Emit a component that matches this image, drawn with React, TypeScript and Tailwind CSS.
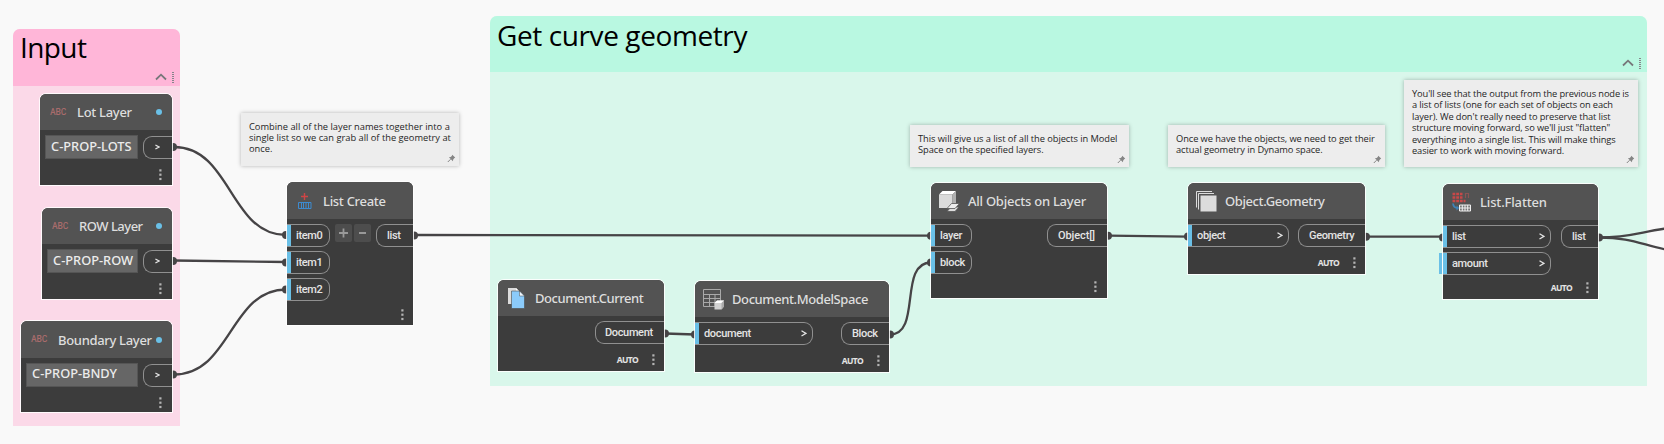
import React from "react";

type Port = { label: string; className: string; chevron?: boolean; pending?: boolean };

const Kebab = ({ className = "" }: { className?: string }) => (
  <svg className={className} width="3" height="12" viewBox="0 0 3 12" fill="#b4b4b4">
    <rect x="0.3" y="0.3" width="2.2" height="2.2" />
    <rect x="0.3" y="4.6" width="2.2" height="2.2" />
    <rect x="0.3" y="8.9" width="2.2" height="2.2" />
  </svg>
);

const Pin = () => (
  <svg className="absolute right-[3px] bottom-[3px]" width="9" height="9" viewBox="0 0 9 9">
    <path d="M5.2 0.8 8.2 3.6 7.2 4.2 6.2 5.4 5.9 7.2 1.9 3.3 3.7 3 4.8 2Z" fill="#858585" />
    <path d="M3.6 5.2 0.8 8" stroke="#858585" strokeWidth="1" />
  </svg>
);

function Note({ className, lines, text }: { className: string; lines: string[]; text: string }) {
  return (
    <div className={`absolute bg-[#ededed] pl-[8px] font-['Open_Sans',sans-serif] text-[9.3px] text-[#1f1f1f] shadow-[0_0_4px_rgba(0,0,0,0.28)] ${className}`}>
      {lines.map((l) => (
        <div key={l} className={`whitespace-nowrap ${text}`}>{l}</div>
      ))}
      <Pin />
    </div>
  );
}

function Group({ className, head, title, headClass, titleClass }: { className: string; head: string; title: string; headClass: string; titleClass: string }) {
  return (
    <section className={`absolute flex flex-col rounded-t-[7px] ${className}`}>
      <header className={`relative rounded-t-[7px] ${headClass} ${head}`}>
        <h2 className={`font-['Open_Sans',sans-serif] whitespace-nowrap text-black ${titleClass}`}>{title}</h2>
        <svg className="absolute right-[4px] bottom-[3px]" width="22" height="12" viewBox="0 0 22 12" fill="none">
          <path d="M2 8.5 7 3.7 12 8.5" stroke="#77777a" strokeWidth="1.8" />
          <path d="M19 1V12" stroke="#85858a" strokeWidth="2" strokeDasharray="1 1" shapeRendering="crispEdges" />
        </svg>
      </header>
    </section>
  );
}

const Chevron = () => (
  <svg width="6" height="7" viewBox="0 0 6 7" fill="none">
    <path d="M0.5 0.8 5 3.4 0.5 6" stroke="#e4e4e4" strokeWidth="1.3" />
  </svg>
);

function InPort({ port }: { port: Port }) {
  return (
    <div className={`relative flex h-[23px] items-center justify-between rounded-r-[9px] border border-l-0 border-[#909090] pr-[5px] pl-[9px] ${port.className}`}>
      <i className="absolute top-0 bottom-0 left-0 w-[4px] bg-[#6ac0e7]" />
      {port.pending && <i className="absolute top-0 bottom-0 left-[-4px] w-[3px] bg-[#6ac0e7]" />}
      <span className="pt-[1px] whitespace-nowrap">{port.label}</span>
      {port.chevron && <Chevron />}
    </div>
  );
}

function OutPort({ port }: { port: Port }) {
  return (
    <div className={`flex h-[23px] items-center rounded-l-[9px] border border-r-0 border-[#909090] ${port.className}`}>
      <span className="pt-[1px] whitespace-nowrap">{port.label}</span>
    </div>
  );
}

type NodeProps = {
  className: string;
  title: string;
  titleClass: string;
  icon: React.ReactNode;
  inputs?: Port[];
  output: Port;
  auto?: boolean;
  foot: string;
  head?: string;
  middle?: React.ReactNode;
};

function GraphNode({ className, title, titleClass, icon, inputs = [], output, auto, foot, head = "h-[36px]", middle }: NodeProps) {
  return (
    <article className={`absolute flex flex-col rounded-t-[6px] bg-[#3c3c3c] font-['Roboto',sans-serif] text-[11px] font-medium tracking-[-0.35px] text-[#e4e4e4] shadow-[0_0_0_1px_rgba(255,255,255,0.85)] ${className}`}>
      <header className={`flex shrink-0 items-center rounded-t-[6px] bg-[#535353] ${head}`}>
        {icon}
        <span className={`pt-[1px] font-['Noto_Sans',sans-serif] text-[13px] leading-none whitespace-nowrap text-[#dedede] ${titleClass}`}>{title}</span>
      </header>
      <div className="flex grow items-start justify-between pt-[5px]">
        <div className="flex flex-col gap-[4px]">
          {inputs.map((p) => <InPort key={p.label} port={p} />)}
        </div>
        {middle}
        <OutPort port={output} />
      </div>
      <footer className={`flex shrink-0 items-center justify-end ${foot}`}>
        {auto && <span className="mr-[14px] font-['Noto_Sans',sans-serif] text-[8.5px] font-bold tracking-[-0.65px]">AUTO</span>}
        <Kebab />
      </footer>
    </article>
  );
}

function LayerNode({ className, title, titleClass, value, valueClass, head }: { className: string; title: string; titleClass: string; value: string; valueClass: string; head: string }) {
  return (
    <article className={`absolute flex flex-col rounded-t-[6px] bg-[#3c3c3c] font-['Noto_Sans',sans-serif] text-[#e0e0e0] shadow-[0_0_0_1px_rgba(255,255,255,0.85)] ${className}`}>
      <header className={`flex shrink-0 items-center rounded-t-[6px] bg-[#535353] pl-[10px] ${head}`}>
        <span className="w-[17px] font-['Roboto',sans-serif] text-[8.5px] leading-none font-medium tracking-[-0.1px] text-[#a86c6c]">ABC</span>
        <span className={`text-[13px] leading-none font-medium whitespace-nowrap text-[#dedede] ${titleClass}`}>{title}</span>
        <i className="mr-[10px] ml-auto size-[6px] shrink-0 rounded-full bg-[#6ac0e7]" />
      </header>
      <div className="flex items-center pt-[5px] pl-[5px]">
        <div className={`flex h-[24px] items-center border border-[#555] bg-[#666] pl-[5px] text-[12.8px] font-medium whitespace-nowrap text-[#ececec] ${valueClass}`}>{value}</div>
        <div className="ml-auto flex h-[23px] w-[29px] items-center rounded-l-[9px] border border-r-0 border-[#909090] pl-[11px]">
          <svg width="5" height="6" viewBox="0 0 5 6" fill="none"><path d="M0.4 1 4 3 0.4 5" stroke="#e4e4e4" strokeWidth="1.2" /></svg>
        </div>
      </div>
      <Kebab className="mt-[10px] mr-[10px] ml-auto" />
    </article>
  );
}

const ListCreateIcon = () => (
  <svg className="ml-[11px]" width="14" height="18" viewBox="0 0 14 18" fill="none">
    <path d="M6.5 1v7M3 4.5h7" stroke="#cf4545" strokeWidth="1.4" />
    <path d="M.5 10.5h12.500v6H.5ZM3.500 10.5v6M5.500 10.5v6M8 10.5v6M10.500 10.5v6" stroke="#3d8bd0" strokeWidth="1" />
  </svg>
);

const DocumentIcon = () => (
  <svg className="ml-[9px]" width="18" height="22" viewBox="0 0 18 22">
    <path d="M1 1h8l3 3v13H1Z" fill="#dcdcdc" />
    <path d="M9 1v3h3Z" fill="#fff" />
    <path d="M4.500 4h8l5 5v12.500h-13Z" fill="#8bcbfb" stroke="#4a4a4a" strokeWidth=".6" />
    <path d="M12.500 4v5h5Z" fill="#eef7ff" stroke="#4a4a4a" strokeWidth=".5" />
  </svg>
);

const ModelSpaceIcon = () => (
  <svg className="ml-[8px]" width="21" height="22" viewBox="0 0 21 22" fill="none">
    <path d="M.5 1.500h17v17H.5ZM.5 6.500h17M.5 10.500h17M.5 14.500h17M6.500 6.500v12M12 6.500v12" stroke="#a9a9a9" strokeWidth="1" />
    <path d="M14 12.500h7v6l-2.500 3h-7v-6.500Z" fill="#d2d2d2" />
    <path d="M14 12.500h7l-2.500 2.500h-7Z" fill="#fff" />
    <path d="M21 12.500v6l-2.500 3v-6.500Z" fill="#aaa" />
  </svg>
);

const LayerIcon = () => (
  <svg className="ml-[7px]" width="22" height="22" viewBox="0 0 22 22">
    <path d="M1 4.500 4.500 1H18L14.500 4.500Z" fill="#fff" />
    <path d="M1 4.500h13.500V18H1Z" fill="#dadada" />
    <path d="M14.500 4.500 18 1v13l-3.500 4Z" fill="#b0b0b0" />
    <path d="M9 21.500h8l4-4.500h-8Z" fill="#ddd" stroke="#555" strokeWidth=".8" />
    <path d="M9 18.500h8l4.500-5h-8Z" fill="#ededed" stroke="#555" strokeWidth=".8" />
  </svg>
);

const GeometryIcon = () => (
  <svg className="ml-[8px]" width="21" height="21" viewBox="0 0 21 21">
    <path d="M.5 16.500V.5H16M2.500 18.500V2.500H18" fill="none" stroke="#dcdcdc" strokeWidth="1" />
    <path d="M4.500 4.500h16v16h-16Z" fill="#dcdcdc" />
  </svg>
);

const FlattenIcon = () => (
  <svg className="ml-[9px]" width="19" height="20" viewBox="0 0 19 20" fill="none">
    <path d="M.5 2h10M.5 5.500h10M.5 9h13" stroke="#c94848" strokeWidth="2.600" strokeDasharray="2.800 .9" />
    <path d="M13.500 6V1.500h3V6" stroke="#8c5454" strokeWidth="1.200" />
    <path d="M1 11.500c.3 3 1.800 4.500 5 4.500" stroke="#3f83b8" strokeWidth="1.800" />
    <path d="M4.500 13.500 7.300 16 4.500 18.500Z" fill="#3f83b8" />
    <path d="M7.500 13h11v6h-11ZM7.500 16h11M10.300 13v6M13 13v6M15.700 13v6" fill="#777" stroke="#eee" strokeWidth="1" />
  </svg>
);

const WIRES = [
  "M174 147C231 147 230 235 286 235",
  "M174 260.500 286 262",
  "M174 374.500C231 374.500 230 289.500 286 289.500",
  "M414 235 931 235.700",
  "M665 333.500 695 334.500",
  "M890 334.500C922 334.500 898 262.500 931 262.500",
  "M1108 235.700 1188 236.700",
  "M1366 236.700H1443",
  "M1599 237.500C1630 237.500 1640 232 1666 228.500",
  "M1599 237.500C1630 237.500 1640 244 1666 249.500",
];

const ENDS = [
  [173, 147], [173, 261], [173, 374.5], [286, 235], [286, 262.5], [286, 289.5], [414, 235.5],
  [665, 333.5], [695, 334.5], [890, 334.5], [931, 235.7], [931, 262.5], [1108, 235.7],
  [1188, 236.5], [1366, 236.7], [1443, 237.5], [1599, 237.5],
];

export default function App() {
  return (
    <main className="relative h-[444px] w-[1664px] overflow-hidden bg-[#f9f9f9]">
      <Group className="top-[29px] left-[13px] h-[397px] w-[167px] bg-[#fbd9e8]" head="h-[57px]" headClass="bg-[#ffb6d8]" title="Input" titleClass="pl-[7px] text-[28px] leading-[37px] tracking-[-0.6px]" />
      <Group className="top-[16px] left-[490px] h-[370px] w-[1157px] bg-[#d9f7eb]" head="h-[56px]" headClass="bg-[#b9f8e1]" title="Get curve geometry" titleClass="pl-[7px] pt-[1px] text-[28px] leading-[37px] tracking-[-0.4px]" />

      <svg className="absolute inset-0" width="1664" height="444" fill="none">
        {WIRES.map((d) => <path key={d} d={d} stroke="#464446" strokeWidth="2.300" />)}
        {ENDS.map(([x, y]) => <circle key={`${x}-${y}`} cx={x} cy={y} r="4" fill="#464446" />)}
      </svg>

      <Note
        className="top-[113px] left-[241px] h-[53px] w-[218px] pt-[8px]"
        text="leading-[11px]"
        lines={["Combine all of the layer names together into a", "single list so we can grab all of the geometry at", "once."]}
      />
      <Note
        className="top-[125px] left-[910px] h-[42px] w-[219px] pt-[8px]"
        text="leading-[11px] tracking-[-0.06px]"
        lines={["This will give us a list of all the objects in Model", "Space on the specified layers."]}
      />
      <Note
        className="top-[125px] left-[1168px] h-[42px] w-[217px] pt-[8px]"
        text="leading-[11px] tracking-[-0.08px]"
        lines={["Once we have the objects, we need to get their", "actual geometry in Dynamo space."]}
      />
      <Note
        className="top-[80px] left-[1404px] h-[87px] w-[234px] pt-[8px]"
        text="leading-[11.4px] tracking-[-0.11px]"
        lines={[
          "You'll see that the output from the previous node is",
          "a list of lists (one for each set of objects on each",
          "layer). We don't really need to preserve that list",
          "structure moving forward, so we'll just \"flatten\"",
          "everything into a single list. This will make things",
          "easier to work with moving forward.",
        ]}
      />

      <LayerNode className="top-[94px] left-[40px] h-[91px] w-[132px]" head="h-[36px]" title="Lot Layer" titleClass="ml-[10px] pt-[1px] tracking-[-0.3px]" value="C-PROP-LOTS" valueClass="w-[93px]" />
      <LayerNode className="top-[208px] left-[42px] h-[91px] w-[130px]" head="h-[36px]" title="ROW Layer" titleClass="ml-[10px] pt-[1px] tracking-[-0.5px]" value="C-PROP-ROW" valueClass="w-[91px]" />
      <LayerNode className="top-[321px] left-[21px] h-[91px] w-[151px]" head="h-[37px]" title="Boundary Layer" titleClass="ml-[10px] pt-[2px] tracking-[-0.32px]" value="C-PROP-BNDY" valueClass="w-[112px] pb-[2px]" />

      <GraphNode
        className="top-[182px] left-[287px] h-[143px] w-[126px]"
        head="h-[37px]"
        icon={<ListCreateIcon />}
        title="List Create"
        titleClass="ml-[11px] tracking-[-0.3px] font-medium"
        inputs={[
          { label: "item0", className: "w-[43px]" },
          { label: "item1", className: "w-[43px]" },
          { label: "item2", className: "w-[43px]" },
        ]}
        middle={
          <div className="flex gap-[2px]">
            {["M4 9h9M8.5 4.500v9", "M5 9h7"].map((d) => (
              <svg key={d} className="rounded-[2px] bg-[#4d4d4d]" width="17" height="18" viewBox="0 0 17 18" fill="none"><path d={d} stroke="#999" strokeWidth="1.800" /></svg>
            ))}
          </div>
        }
        output={{ label: "list", className: "w-[37px] pl-[10px]" }}
        foot="h-[21px] pr-[9px]"
      />
      <GraphNode
        className="top-[280px] left-[498px] h-[91px] w-[166px]"
        icon={<DocumentIcon />}
        title="Document.Current"
        titleClass="ml-[10px] tracking-[-0.45px] font-medium"
        output={{ label: "Document", className: "w-[69px] pl-[9px]" }}
        auto
        foot="h-[22px] pr-[9px]"
      />
      <GraphNode
        className="top-[281px] left-[695px] h-[91px] w-[194px]"
        icon={<ModelSpaceIcon />}
        title="Document.ModelSpace"
        titleClass="ml-[8px] tracking-[-0.41px] font-medium"
        inputs={[{ label: "document", className: "w-[118px]", chevron: true }]}
        output={{ label: "Block", className: "w-[48px] pl-[10px]" }}
        auto
        foot="h-[22px] pr-[9px]"
      />
      <GraphNode
        className="top-[183px] left-[931px] h-[115px] w-[176px]"
        icon={<LayerIcon />}
        title="All Objects on Layer"
        titleClass="ml-[8px] tracking-[-0.25px] font-medium"
        inputs={[{ label: "layer", className: "w-[41px]" }, { label: "block", className: "w-[41px]" }]}
        output={{ label: "Object[]", className: "w-[60px] pl-[10px] tracking-[-0.1px]" }}
        foot="h-[22px] pr-[10px]"
      />
      <GraphNode
        className="top-[183px] left-[1188px] h-[91px] w-[177px]"
        icon={<GeometryIcon />}
        title="Object.Geometry"
        titleClass="ml-[8px] tracking-[-0.4px] font-medium"
        inputs={[{ label: "object", className: "w-[101px]", chevron: true }]}
        output={{ label: "Geometry", className: "w-[67px] pl-[10px]" }}
        auto
        foot="h-[22px] pr-[9px]"
      />
      <GraphNode
        className="top-[184px] left-[1443px] h-[115px] w-[155px]"
        icon={<FlattenIcon />}
        title="List.Flatten"
        titleClass="ml-[9px] tracking-[-0.15px] font-medium"
        inputs={[{ label: "list", className: "w-[108px]", chevron: true }, { label: "amount", className: "w-[108px]", chevron: true, pending: true }]}
        output={{ label: "list", className: "w-[37px] pl-[10px]" }}
        auto
        foot="h-[22px] pr-[9px]"
      />
    </main>
  );
}
